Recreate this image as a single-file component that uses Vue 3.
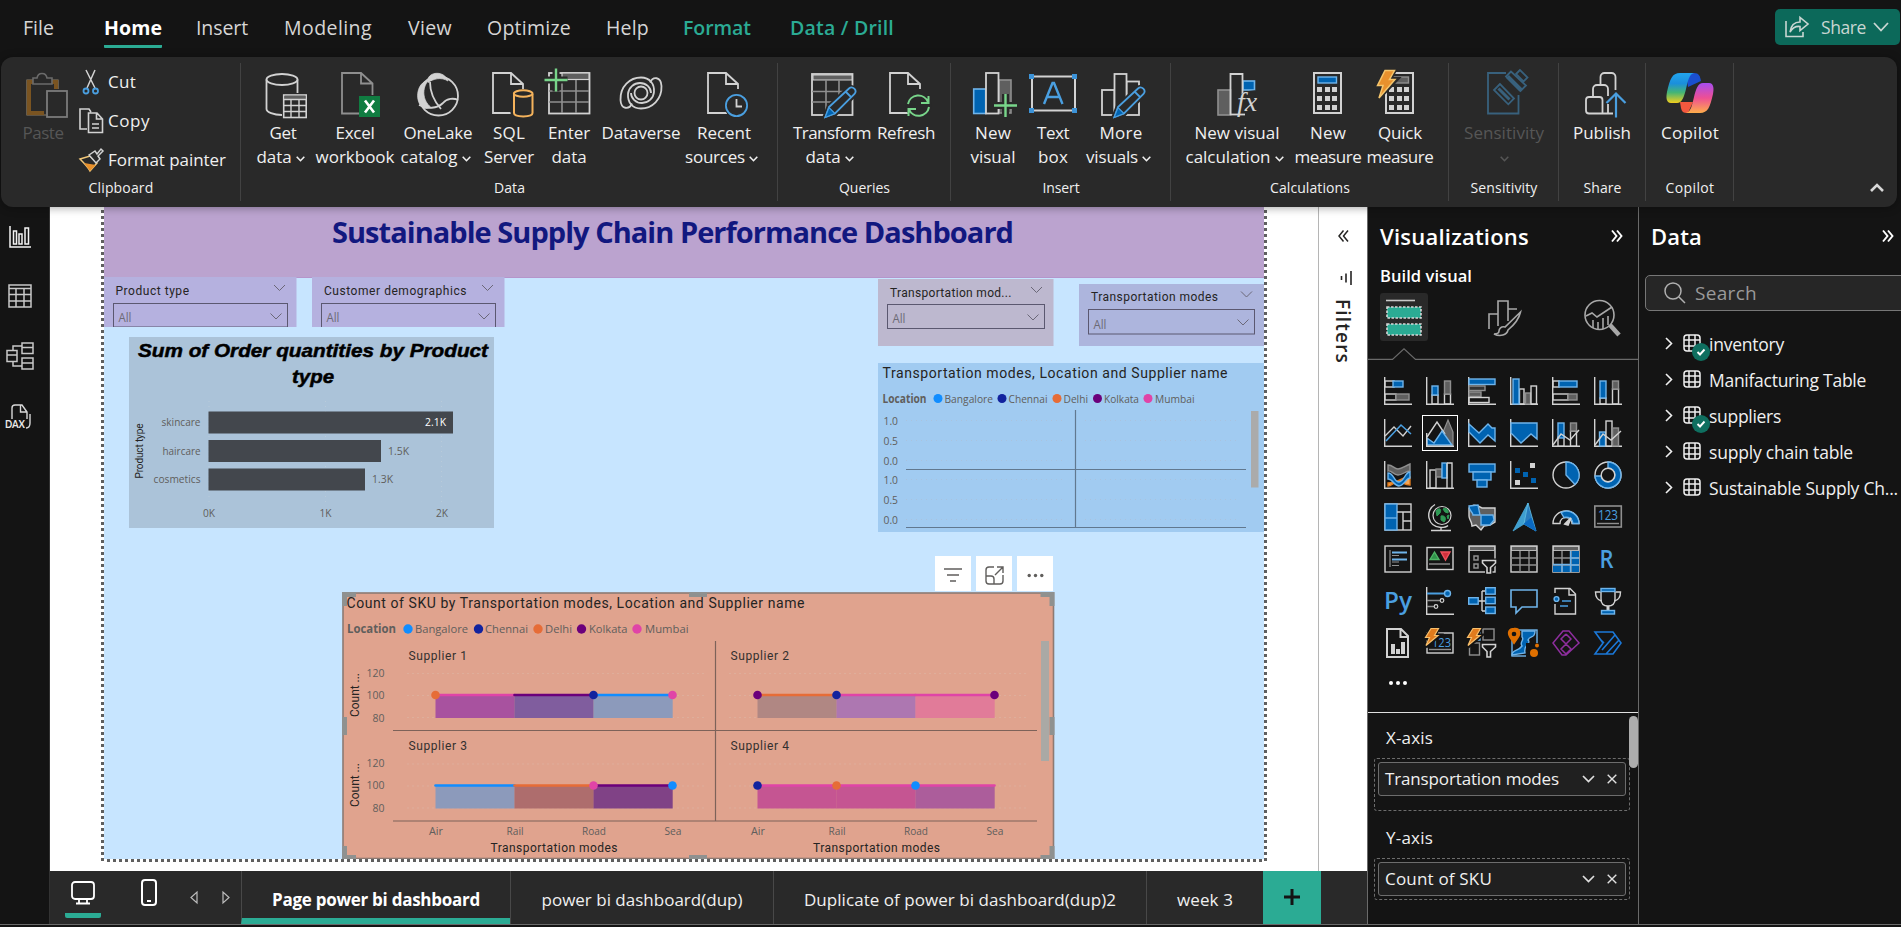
<script setup>
import { computed } from 'vue'

/* Tightens or loosens tracking so a label takes the given length */
const vFit = {
  mounted(el, { value }) {
    if (!value) return
    const n = el.textContent.trim().length
    const b = el.getBoundingClientRect()
    const vertical = getComputedStyle(el).writingMode.startsWith('vertical')
    el.style.letterSpacing = ((value - (vertical ? b.height : b.width)) / n).toFixed(3) + 'px'
  }
}

/* ---- small SVG builders ---- */
const W = '#d2d2d2', GR = '#8f8f8f', GF = '#5f5f5f', BF = '#0063b1', BS = '#6fb4ea', BL = '#4a9fe0', BG = '#292929'
const r = (x, y, w, h, f = 'none', s = 'none', sw = 1.4, rx = 0) => `<rect x="${x}" y="${y}" width="${w}" height="${h}" fill="${f}" stroke="${s}" stroke-width="${sw}" rx="${rx}"/>`
const p = (d, s = W, f = 'none', sw = 1.4) => `<path d="${d}" stroke="${s}" fill="${f}" stroke-width="${sw}"/>`
const c = (x, y, rad, f = 'none', s = 'none', sw = 1.4) => `<circle cx="${x}" cy="${y}" r="${rad}" fill="${f}" stroke="${s}" stroke-width="${sw}"/>`
const t = (x, y, s, size, f, len, wt = 400) => `<text x="${x}" y="${y}" font-size="${size}" fill="${f}" font-weight="${wt}" font-family="Open Sans, sans-serif" textLength="${len}" lengthAdjust="spacingAndGlyphs">${s}</text>`
const doc = (x, s = W) => p(`M${x + 20} 43H${x + 1}V3H${x + 19}L${x + 31} 14V19M${x + 19} 3V14H${x + 31}`, s, 'none', 1.8)
const pencil = p('M17 47l4-10L41 18a4.6 4.6 0 0 1 6 6L27 44z', BG, BG, 5) + p('M17.5 47l3.5-10L41 18.500a3.900 3.900 0 0 1 5.500 5.500L27 43.500zM37.500 21.500l6 6', BL, BG, 1.8) + p('M17 47.500l4-10 6 6z', BL, '#0063b1', 1.2)
const plus = (x, y, n) => p(`M${x - n} ${y}H${x + n}M${x} ${y - n}V${y + n}`, BG, 'none', 7) + p(`M${x - n} ${y}H${x + n}M${x} ${y - n}V${y + n}`, '#78d58a', 'none', 2.4)
const calc = r(10, 3, 27, 40, BG, W, 2) + [17, 26, 35].map(y => [13, 21, 28].map(x => r(x, y, 5, 5, W)).join('')).join('')
const swirl = 'M15 33.500C12 40 4 39.500 3.500 30C3 16.500 13 7.500 24 7.500C33 7.500 37.500 14 37 22C36.500 28.500 31 33 25 33C19 33 14 28.500 14 23'

const ribbonIcons = {
  getdata: `<ellipse cx="23" cy="9.500" rx="15.500" ry="5.500" fill="none" stroke="${W}" stroke-width="1.800"/>` + p('M7.500 9.500V39c0 3 7 6 15.500 6M38.500 9.500V23', W, 'none', 1.8) + r(24.700, 25, 22.500, 22.500, BG, W, 1.6) + r(25.500, 25.700, 21, 3.500, GF) + p('M25 29.500H47M25 35.500H47M25 41.500H47M32 29.500V47M40 29.500V47', W, 'none', 1.4),
  excel: p('M28 43.500H11V3H30L41.500 13.500V25M30 3V13.500H41.500', GR, 'none', 1.8) + r(28, 26, 21, 21, '#107c41') + p('M34 30.500L43 42.500M43 30.500L34 42.500', '#fff', 'none', 2.600),
  onelake: c(24.500, 26, 19.500, 'none', W, 1.8) + p('M14 9.500C15 2 30 0 34 11 27 6.500 19 9 14 12.500zM12 11C2 15 1 32 9 38c4 1 6 0 8-.500C8 30 8 18 14 11z', W, W, .8) + p('M16 12c0 8 3 18 11 27M5 35c8 4 18 4 24-2 4-5 11-5 15-3', W, 'none', 1.8),
  sql: doc(7) + `<path d="M28 24v19c0 5 20 5 20 0V24" fill="${BG}" stroke="${BG}" stroke-width="5"/><path d="M29 24v19c0 4.500 18.500 4.500 18.500 0V24" fill="${BG}" stroke="#f5b35c" stroke-width="2"/><ellipse cx="38.200" cy="23.500" rx="9.300" ry="3.200" fill="${BG}" stroke="#f5b35c" stroke-width="2"/>`,
  enter: r(4, 3, 40.500, 40.500, 'none', W, 1.8) + r(17, 3, 27, 6.500, GF, W, 1.2) + p('M4 21H44M4 32H44M17 10V43M31 10V43', GR, 'none', 1.6) + plus(11, 10, 11.500),
  dataverse: p(swirl, W, 'none', 1.8) + `<g transform="rotate(180 24 23)">${p(swirl, W, 'none', 1.8)}</g>` + c(24, 23, 6.500, BG, W, 1.8),
  recent: doc(7) + c(36.500, 35.500, 12.500, BG) + c(36.500, 35.500, 10.600, BG, BL, 1.8) + p('M36.500 29V36.500H42', W, 'none', 1.8),
  transform: r(4, 4, 40.500, 41, 'none', W, 1.8) + r(5, 5, 39, 5, GF, W, 1) + p('M4 21.500H36M4 32H27M18 10V44M31 10V26', GR, 'none', 1.6) + pencil,
  refresh: doc(7) + c(36.500, 35.500, 13, BG) + p('M26 34a10.500 10.500 0 0 1 20-2M47 37a10.500 10.500 0 0 1-20 2.500M46.500 26V33H39M26.500 46V39H34', '#78d58a', 'none', 2),
  newvisual: r(4.700, 19, 12, 24.500, BF, BS, 1.6) + r(30, 10, 12, 33, GF, GR, 1.6) + r(17, 3, 12.500, 40.500, BG, W, 1.8) + plus(36.500, 35.500, 11.500),
  textbox: r(3, 6.500, 43, 34, 'none', W, 2) + [[0, 4], [43, 4], [0, 38], [43, 38]].map(a => r(a[0], a[1], 5, 5, '#3c93d8')).join('') + p('M15 34L23.500 13H25L33.500 34M18 27H31', BL, 'none', 2.4),
  morevisuals: r(5, 20, 12.500, 25, BG, W, 1.8) + r(29.500, 11.500, 12.500, 33.500, BG, W, 1.8) + r(17.500, 4, 12, 41, BG, W, 1.8) + pencil,
  calculation: r(5, 20, 12.500, 25, GF, GR, 1.6) + r(30, 11, 11.500, 9, BF, BS, 1.6) + p('M17.500 45V4H29.500V24', W, 'none', 1.8) + p('M17.500 44.500H32', W, 'none', 1.8) + p('M30 24c4-2 7-3 12-3v12H30z', BG, BG) + `<text x="24" y="41" font-family="Liberation Serif, serif" font-style="italic" font-size="28" fill="${W}">fx</text>`,
  measure: calc + r(14, 7, 18.500, 6, BF, BS, 1.4),
  quick: calc + r(14, 7, 18.500, 6, GF, GR, 1.4) + p('M9 0h10l-5 9h7L2 29l4-13H0z', BG, BG, 4) + p('M9 .500h9.500l-5 9H19L3 28l4-12.500H1.500z', '#f5c66d', '#e8912d', 1.5),
  sensitivity: p('M26 3H8V43.500H38.500V25', '#38617d', 'none', 1.8) + `<g fill="${BG}" stroke="#38617d" stroke-width="1.800"><path d="M20 14L14 20 28.300 34.300 34 28.500z"/><path d="M18.500 18.500L29.500 29.500" stroke-width="3"/><path d="M40 0L36 4 43.500 11.500 47.500 7.500z"/><path d="M31 1.500L26 6.500 40.500 21 46 15.500z"/><path d="M27.500 6.500L41 20" stroke-width="4"/></g>`,
  publish: p('M22.500 15V7a4 4 0 0 1 4-4h7a4 4 0 0 1 4 4V20M15 26.500V19a4 4 0 0 1 4-4h7a4 4 0 0 1 4 4V26M30 34V43.500', W, 'none', 1.8) + p('M24.500 43.500V30a3 3 0 0 0-3-3H11a3 3 0 0 0-3 3V40.500a3 3 0 0 0 3 3H35', W, 'none', 1.8) + p('M38 47.500V24M28.500 33L38 23.500 47.500 33', BL, 'none', 2.2),
  copilot: `<defs><linearGradient id="cpa" x1="0" y1="0" x2="0" y2="1"><stop offset="0" stop-color="#22a5ee"/><stop offset=".35" stop-color="#1b8fdc"/><stop offset=".65" stop-color="#45b575"/><stop offset="1" stop-color="#f2cf1d"/></linearGradient><linearGradient id="cpb" x1="0" y1="0" x2="0" y2="1"><stop offset="0" stop-color="#a64df0"/><stop offset=".5" stop-color="#ee4f94"/><stop offset="1" stop-color="#ffae4a"/></linearGradient></defs><path d="M20 3h8c5 0 6 3 7 8l-13 6z" fill="#1a4fd0"/><path d="M14 32h13l-5 11c-5 0-6-1-7-5z" fill="#f2583e"/><path d="M14 3h14c-5 1-6 8-8 16-2 8-4 14-9 14H5c-5 0-5-6-4-11C4 9 6 3 14 3z" fill="url(#cpa)"/><path d="M34 43H20c5-1 6-8 8-16 2-8 4-14 9-14h6c5 0 5 6 4 11-3 13-5 19-13 19z" fill="url(#cpb)"/>`
}

const tabs = [
  { label: 'File', x: 23, w: 31 }, { label: 'Home', x: 104, w: 58, active: true }, { label: 'Insert', x: 196, w: 52 },
  { label: 'Modeling', x: 284, w: 88 }, { label: 'View', x: 408, w: 44 }, { label: 'Optimize', x: 487, w: 84 },
  { label: 'Help', x: 606, w: 43 }, { label: 'Format', x: 683, w: 68, green: true }, { label: 'Data / Drill', x: 790, w: 104, green: true }
]
tabs.forEach((tab, i) => { tab.gap = tab.x - (i ? tabs[i - 1].x + tabs[i - 1].w : 0) })

const groups = [
  { name: 'Data', nw: 31, left: 241, right: 778, items: [
    { cx: 283, icon: 'getdata', a: 'Get', aw: 27, b: 'data', bw: 35, menu: true },
    { cx: 355, icon: 'excel', a: 'Excel', aw: 39, b: 'workbook', bw: 79 },
    { cx: 438, icon: 'onelake', a: 'OneLake', aw: 69, b: 'catalog', bw: 57, menu: true },
    { cx: 509, icon: 'sql', a: 'SQL', aw: 32, b: 'Server', bw: 50 },
    { cx: 569, icon: 'enter', a: 'Enter', aw: 42, b: 'data', bw: 35 },
    { cx: 641, icon: 'dataverse', a: 'Dataverse', aw: 79 },
    { cx: 724, icon: 'recent', a: 'Recent', aw: 54, b: 'sources', bw: 60, menu: true }] },
  { name: 'Queries', nw: 51, left: 778, right: 951, items: [
    { cx: 832, icon: 'transform', a: 'Transform', aw: 78, b: 'data', bw: 35, menu: true },
    { cx: 906, icon: 'refresh', a: 'Refresh', aw: 58 }] },
  { name: 'Insert', nw: 37, left: 951, right: 1171, items: [
    { cx: 993, icon: 'newvisual', a: 'New', aw: 36, b: 'visual', bw: 45 },
    { cx: 1053, icon: 'textbox', a: 'Text', aw: 32, b: 'box', bw: 30 },
    { cx: 1121, icon: 'morevisuals', a: 'More', aw: 43, b: 'visuals', bw: 52, menu: true }] },
  { name: 'Calculations', nw: 80, left: 1171, right: 1449, items: [
    { cx: 1237, icon: 'calculation', a: 'New visual', aw: 85, b: 'calculation', bw: 85, menu: true },
    { cx: 1328, icon: 'measure', a: 'New', aw: 36, b: 'measure', bw: 67 },
    { cx: 1400, icon: 'quick', a: 'Quick', aw: 44, b: 'measure', bw: 67 }] },
  { name: 'Sensitivity', nw: 67, left: 1449, right: 1559, items: [
    { cx: 1504, icon: 'sensitivity', a: 'Sensitivity', aw: 80, b: '', menu: true, off: true }] },
  { name: 'Share', nw: 38, left: 1559, right: 1646, items: [{ cx: 1602, icon: 'publish', a: 'Publish', aw: 58 }] },
  { name: 'Copilot', nw: 49, left: 1646, right: 1734, items: [{ cx: 1690, icon: 'copilot', a: 'Copilot', aw: 58 }] }
]
groups.forEach(g => g.items.forEach((it, i) => { it.gap = i ? it.cx - g.items[i - 1].cx - 48 : it.cx - 24 - g.left }))

/* ---- visual gallery ---- */
const ax = p('M.7 0V27.300H28', W)
const tbl = r(1, 1, 26, 26, 'none', W) + r(1.500, 1.500, 25, 4, GF, W, .8)
const bolt = p('M5-1h8L9 6h5L0 18l3-8H-2z', '#141414', '#141414', 3) + p('M5-.500h7.500L8.500 6.500H12L0 16.500 3.500 8.500H-.500z', '#f8bf6b', '#e07b1d', 1.2)
const funnel = p('M15 15.500h12v3l-4.500 4V28h-3.500v-5.500L15 18.500z', '#141414', '#141414', 4) + p('M14.500 15.500h13v2.500l-5 4.500V28h-3.500v-5.500l-4.500-4.500z', W, '#141414', 1.6)
const gallery = [
  ax + r(1, 4, 9, 6, 'none', W) + r(9, 4, 10, 6, BF, BS) + r(1, 17, 11, 6, 'none', W) + r(12, 17, 13, 6, GF, GR),
  ax + r(6, 18, 6, 9, 'none', W) + r(6, 9, 6, 9, BF, BS) + r(18.500, 17, 6, 10, 'none', W) + r(18.500, 4, 6, 13, GF, GR),
  ax + r(1, 2, 26, 5.500, BF, BS) + r(1, 9, 16, 4.500, '#333', GR) + r(1, 15, 12, 4.500, GF, GR) + r(1, 20.500, 20, 5, 'none', W),
  ax + r(9.500, 12, 4.500, 15, 'none', W) + r(3, 2, 6, 25, BF, BS) + r(15.500, 16, 5, 11, GF, GR) + r(21, 9, 5.500, 18, 'none', W),
  ax + r(1, 4, 6, 6, 'none', W) + r(7, 4, 18, 6, BF, BS) + r(1, 17, 15, 6, 'none', W) + r(16, 17, 9, 6, GF, GR),
  ax + r(6, 21, 6, 6, 'none', W) + r(6, 4, 6, 17, BF, BS) + r(18.500, 12, 6, 15, 'none', W) + r(18.500, 4, 6, 8, GF, GR),
  ax + p('M1 17L10 8l9 9 8-10', W) + p('M2 22L17 6l10 9', BL, 'none', 1.6),
  p('M15 18L22 1l5 12V26H14z', GR, GF, 1.2) + p('M1 18L11 3l8 12', W) + p('M1 26V19l7 5 8-12 10 14z', BS, BF, 1.4) + p('M.7 14V27.300H28'),
  ax + p('M1 5l10 9 9-9 4 4h3V22l-7-6-8 8L1 13z', BS, BF),
  ax + p('M1 4H27V20l-6-5-10 9L1 14z', BS, BF),
  ax + r(6, 18, 6, 9, '#141414', W) + r(6, 4, 6, 15, BF, BS) + r(18.500, 12, 6, 15, '#141414', W) + r(18.500, 4, 6, 8, GF, GR) + p('M1 26l8-11 9 6 9-10', W),
  ax + r(5.500, 13, 6, 14, BF, BS) + r(12, 2, 6, 25, '#141414', W) + r(18.500, 9, 6, 18, GF, GR) + p('M1 26l8-11 8 6 10-9', W),
  ax + p('M4 4c5 0 6 4 10 4s7-3 12-5v7c-5 0-7 4-12 4S8 9 4 10z', GR, GF) + p('M4 22c6 0 10-2 14-4s6-3 8-2v8c-6 0-7-3-12-3s-6 4-10 4z', '#e07b1d', '#f5a655') + p('M4 12c6 0 6 9 11 9s6-10 11-10v6c-4 0-6 8-11 8S9 18 4 18z', BS, BF),
  ax + r(4, 9, 6, 18, 'none', W) + r(10, 8, 6, 8, GF, GR) + r(16, 2, 5, 15, BF, BS) + p('M21 2H26V27M21 27V2', W),
  r(1, 3, 26, 8, BF, BS) + r(5, 11, 18, 8, BF, BS) + r(9, 19, 10, 7, BF, BS),
  ax + r(20, 2, 5, 5, W) + r(5, 7, 5, 5, BF) + r(13, 11, 5, 5, BF) + r(21, 17, 5, 5, BF) + r(5, 19, 5, 5, W),
  c(14, 14, 13, 'none', W) + p('M14 1a13 13 0 0 1 9 22.500L14 14z', BS, BF),
  c(14, 14, 13, '#141414', W) + p('M14 1a13 13 0 1 1-13 14h6A7 7 0 1 0 14 7z', BS, BF) + c(14, 14, 6.800, '#141414', W),
  r(1, 1, 26, 26, 'none', W) + r(1, 1, 12, 26, BF, BS) + p('M1 15H13', BS) + p('M13 9H27M19 9V27M19 18H27', W),
  c(16, 12.500, 9, '#141414', W, 1.2) + p('M10 8c3-4 6-2 4 2l-3 3zM17 6c3-2 6 1 5 4l-3-1zM15 13c4-1 6 3 3 6l-3-2zM21 13l2-1-1 4z', '#2f9a55', '#2f9a55', 1) + p('M9 1.500C-1 7 1 24 15 24.500c4 0 6-1 7-2M15 24.500V27M5 27.500H25', W),
  p('M1 5c4-4 6-3 9-2l4 2h13v14l-5 3-6 1-3 4-5-5-4 1c0-5-3-6-3-10z', W, GF) + p('M1 3l9-1 2 10H5c0-3-4-4-4-9zM13 12h12l1 5-4 5h-9z', BS, BF),
  p('M18 0L3 28l11-7z', '#4aa9d8', '#3f9fd0', .8) + p('M18 0l8 28-12-7z', '#65c3ea', '#2a7dbd', .8) + p('M14 21l12 7-5-13z', '#0a69c2', '#0a69c2', .8),
  p('M1 20.500C1 13 7 8 14 8s13 5 13 12.500h-7c0-4-3-6-6-6s-6 2-6 6z', W, '#141414') + p('M9 9.500C18 5 27 12 27 20.500h-6c0-4-4-7-9-6z', BS, BF) + p('M13 21l6-6-3 7z', W, W, 1.800),
  r(.800, 3, 26.500, 21, 'none', GR, 1.6) + t(4, 17, '123', 14, BL, 20) + p('M3 20.500H25', GR),
  r(1, 1, 26, 26, 'none', W) + p('M6 5V22M8 17H15M8 10.500H15M8 20.500H15', GR, 'none', 1.2) + p('M8 7.500H23M8 14.500H23', BS, 'none', 2),
  r(1, 2.500, 26, 22, 'none', W) + p('M4 14.500L8.500 7l4.500 7.500z', '#4fb465', '#30924a') + p('M15 7h9l-4.500 8z', '#f0505c', '#d0303c') + p('M3 19H24', GR),
  r(1, 1, 26, 26, 'none', W) + r(1.500, 1.500, 25, 4, GF, W, .8) + r(6, 11, 4, 4, 'none', GR, 1.5) + r(6, 19, 4, 4, 'none', GR, 1.5) + funnel,
  tbl + p('M1 13H27M1 20H27M10 6V27M19 6V27', GR),
  tbl + r(19, 6, 8, 21, BF) + r(1, 20, 26, 7, BF) + p('M1 13H27M1 20H27M10 6V27M19 6V27', GR) + p('M18.500 6V19.500H1M18.500 13H27M18.500 20H27M10 20V27M18.500 20V27', BS),
  t(5.5, 23, 'R', 25, BL, 14, 600),
  t(0, 22, 'Py', 24, BL, 28, 600),
  p('M.7 0V27.300H28', W) + p('M1 6.500H18', BL, 'none', 2) + c(21.500, 6.500, 3, BF, BS) + p('M1 13.500H15M1 19.500H9', GR) + c(16, 13.500, 1.800, '#141414', W, 1.2) + c(10, 19.500, 1.800, '#141414', W, 1.2),
  p('M10 14H18M14 4V24M14 4H18M14 24H18', W) + r(.700, 10.700, 9.500, 6.500, BF, BS) + r(17.700, .700, 9.500, 6.500, BF, BS) + r(17.700, 10.200, 9.500, 6.500, BF, BS) + r(17.700, 20, 9.500, 6.500, BF, BS),
  p('M1 3H27V20H12L6 26V20H1z', BS, 'none', 1.6),
  p('M3 6V1.500H18L23.500 7V27H3V17M17 1.500V8H23.500', W) + c(4.500, 12, 2.400, BF, BS) + p('M10 14H19M8 19H16', BL, 'none', 1.500),
  p('M6.500 5H1.500c0 6 2 8 6 9M21.500 5h5c0 6-2 8-6 9', W) + p('M7 5V12c0 5 3 7 7 7s7-2 7-7V5', W) + p('M14 19V23', W, 'none', 3) + r(7, 1.500, 14, 3, BF, BS) + r(7.500, 23.500, 13, 3.500, BF, BS),
  p('M3 0H17L24 7V28H3zM16.500 0V8H24', W, 'none', 2) + p('M9 15V25M14 20V25M19 13V25', W, 'none', 4),
  r(1, 4, 26, 20, 'none', W) + t(6, 18, '123', 13, BL, 19) + p('M3 20.500H25', GR) + bolt,
  r(15, 0, 11, 11, 'none', GR) + r(1.500, 14, 10, 12, 'none', GR) + p('M8 10l4-5V11H8z', BS, BF) + bolt + funnel,
  r(2, 1, 25, 26, '#141414', BS) + p('M12 2H25c0 8-5 4-7 9 4 4-5 4-3 13L2 26c0-6 6-3 10-9-3-4 3-6 0-9z', BS, BF) + r(16, 14, 12, 14, '#141414') + p('M4-.500c6-1 7 5 4 9l-4 6-4-6c-3-5-1-9 4-9z', '#e07000', '#e07000') + c(4, 5, 2.300, '#141414') + c(24, 24, 4, '#e07000') + c(27, 16.500, 2, '#e07000'),
  p('M11 2L1 14 10 26h4L27 14 17 2zM11 2h6M14 5l5 5-5 5 5 5-5 5M14 5l-5 5 5 5-5 5 5 5', '#8e2e9e', 'none', 1.500),
  p('M1 3H19L27 14 19 25H1L9 14zM21 6L8 21M25 11L12 25M6 10l4 4', '#1b78d8', 'none', 1.600)
]

const legend = [
  { n: 'Bangalore', color: '#118dff' }, { n: 'Chennai', color: '#12239e' }, { n: 'Delhi', color: '#e66c37' },
  { n: 'Kolkata', color: '#6b007b' }, { n: 'Mumbai', color: '#e044a7' }
]
const legendA = [[938, 944.5, 48.5], [1002, 1008.5, 39], [1057, 1063.5, 24.5], [1097.5, 1104, 35], [1148, 1155, 39.5]]
const legendB = [[408, 415, 53], [478.5, 485, 43], [538, 545, 27], [581.5, 589, 38.5], [637, 645, 43.5]]

const slicers = [
  { x: 104, y: 277, w: 192.5, h: 50, bg: '#b5b1df', label: 'Product type', tx: 115.5, tw: 73.5, base: 294.5, cx: 274, cy: 285, bx: 113.5, by: 303.500, bw: 174, bh: 23.500, ax: 118.5, ay: 322 },
  { x: 312, y: 277, w: 192.5, h: 50, bg: '#b5b1df', label: 'Customer demographics', tx: 324, tw: 142.5, base: 294.5, cx: 482, cy: 285, bx: 321.5, by: 303.500, bw: 174, bh: 30, ax: 326.500, ay: 322 },
  { x: 878, y: 279, w: 175.5, h: 67, bg: '#bdb8cf', label: 'Transportation mod...', tx: 890, tw: 121.500, base: 296.5, cx: 1031, cy: 287, bx: 887.5, by: 304.500, bw: 157, bh: 24, ax: 892.500, ay: 323 },
  { x: 1079, y: 283.5, w: 185, h: 62.5, bg: '#adb5dd', label: 'Transportation modes', tx: 1091, tw: 127, base: 300.5, cx: 1241, cy: 291, bx: 1088.5, by: 309, bw: 166, bh: 24.500, ax: 1093.500, ay: 328 }
]
const box = s => ({ left: s.x - 104 + 'px', top: s.y - 207 + 'px', width: s.w + 'px', height: s.h + 'px' })

const bars = [
  { n: 'skincare', y: 411, w: 244.5, lw: 39, v: '2.1K', vx: 425, inside: true },
  { n: 'haircare', y: 439.500, w: 172.5, lw: 38, v: '1.5K', vx: 388 },
  { n: 'cosmetics', y: 468, w: 156.5, lw: 47, v: '1.3K', vx: 372 }
]
const panels = [
  { n: 'Supplier 1', x: 435.5, y: 695, fills: ['#a8529f', '#805d9e', '#8c9abb'], lines: ['#e044a7', '#6b007b', '#118dff'], dots: [[0, '#e66c37'], [2, '#12239e'], [3, '#e044a7']] },
  { n: 'Supplier 2', x: 757.5, y: 695, fills: ['#b08783', '#ad77b1', '#e17b99'], lines: ['#e66c37', '#e044a7', '#e044a7'], dots: [[0, '#6b007b'], [1, '#12239e'], [3, '#6b007b']] },
  { n: 'Supplier 3', x: 435.5, y: 785.5, fills: ['#8c9abb', '#ae6d6d', '#804286'], lines: ['#118dff', '#e66c37', '#6b007b'], dots: [[2, '#e044a7'], [3, '#118dff']] },
  { n: 'Supplier 4', x: 757.5, y: 785.5, fills: ['#c55592', '#c55592', '#ac5d9b'], lines: ['#e044a7', '#e044a7', '#e044a7'], dots: [[0, '#12239e'], [1, '#e66c37'], [2, '#118dff']] }
]
const modes = computed(() => [435.5, 757.5].flatMap(x => [['Air', 14], ['Rail', 17], ['Road', 24], ['Sea', 17]].map(([n, w], i) => ({ n, w, x: x + i * 79 + .5 }))))
const handles = ['M342 592h14v5h-9v9h-5z', 'M1054.500 592h-14v5h9v9h5z', 'M342 859v-13h5v9h9v4z', 'M1054.500 859v-13h-5v9h-9v4z', 'M689 592h18v5h-18z', 'M689 855h18v4h-18z', 'M342 717h5v18h-5z', 'M1049.500 717h5v18h-5z']

const pages = [
  { n: 'Page power bi dashboard', w: 269, tw: 208, active: true },
  { n: 'power bi dashboard(dup)', w: 263, tw: 201 },
  { n: 'Duplicate of power bi dashboard(dup)2', w: 373, tw: 312 },
  { n: 'week 3', w: 117, tw: 56 }
]
const tables = [
  { n: 'inventory', w: 75, used: true }, { n: 'Manifacturing Table', w: 157 }, { n: 'suppliers', w: 72, used: true },
  { n: 'supply chain table', w: 144 }, { n: 'Sustainable Supply Ch...', w: 189 }
]
const wells = [
  { n: 'X-axis', nw: 47, f: 'Transportation modes', fw: 174, tall: true },
  { n: 'Y-axis', nw: 47, f: 'Count of SKU', fw: 107 }
]
</script>

<template>
  <div class="app">
    <header class="menu">
      <nav class="tabs">
        <a v-for="tab in tabs" :key="tab.label" class="tab" :class="{ active: tab.active, green: tab.green }" :style="{ marginLeft: tab.gap + 'px', width: tab.w + 'px' }"><span v-fit="tab.w">{{ tab.label }}</span></a>
      </nav>
      <button class="share">
        <svg width="24" height="22" viewBox="0 0 24 22" fill="none" stroke="#c9d6d2" stroke-width="1.6"><path d="M1 5V20.500H18V16M5 16C6 9 10 6 15 6V1.500L23 8 15 14.500V10.500C11 10 8 11 5 16z" /></svg>
        <span v-fit="45">Share</span>
        <svg width="16" height="10" viewBox="0 0 16 10" fill="none" stroke="#c9d6d2" stroke-width="1.8"><path d="M1 1L8 8.500 15 1" /></svg>
      </button>
    </header>

    <section class="ribbon">
      <div class="group clipboard">
        <div class="clip-body">
          <div class="paste">
            <svg width="42" height="47" viewBox="0 0 42 47" fill="none">
              <path d="M20 43H1V8H32V17" stroke="#8f8068" stroke-width="1.200" /><path d="M18 41H3V10H30V17" stroke="#7a5421" stroke-width="4" />
              <path d="M7 12V6H11C12 0 20 0 21 6H26V12z" fill="#292929" stroke="#6b6b6b" stroke-width="1.600" />
              <rect x="21" y="19" width="20" height="26" fill="#292929" stroke="#7b7b7b" stroke-width="1.800" />
            </svg>
            <span v-fit="41">Paste</span>
          </div>
          <ul class="clip-list">
            <li><svg width="24" height="26" viewBox="0 0 24 26" fill="none"><path d="M7 1L16 19M16 1L8 19" stroke="#d2d2d2" stroke-width="1.500" /><circle cx="7" cy="22" r="2.500" stroke="#4a9fe0" stroke-width="1.800" /><circle cx="16.500" cy="22" r="2.500" stroke="#4a9fe0" stroke-width="1.800" /></svg><span v-fit="28">Cut</span></li>
            <li><svg width="24" height="26" viewBox="0 0 24 26" fill="none" stroke="#d2d2d2" stroke-width="1.600"><path d="M8 21H1V1H10L12 4M9.500 5H18L23.500 11V24.500H9.500zM17.500 5V11H23.500M13 16H20M13 20H20" /></svg><span v-fit="42">Copy</span></li>
            <li><svg width="24" height="26" viewBox="0 0 24 26"><path d="M1 12L11 9l7 7L11 24C9 20 5 16 1 12z" fill="#292929" stroke="#f2c879" stroke-width="1.500" /><path d="M5 16l12 2L11 24z" fill="#e8912d" /><path d="M10 8L16 4 18 7 22 2 24 4 19 9 21 12 17 16z" fill="#292929" stroke="#d2d2d2" stroke-width="1.500" /></svg><span v-fit="118">Format painter</span></li>
          </ul>
        </div>
        <div class="gname"><span v-fit="65">Clipboard</span></div>
      </div>

      <div v-for="g in groups" :key="g.name" class="group" :style="{ width: g.right - g.left + 'px' }">
        <div class="gbody">
          <div v-for="it in g.items" :key="it.icon" class="rbtn" :class="{ off: it.off }" :style="{ marginLeft: it.gap + 'px' }">
            <svg class="ricon" width="48" height="48" viewBox="0 0 48 48" v-html="ribbonIcons[it.icon]"></svg>
            <div class="rl"><span v-fit="it.aw">{{ it.a }}</span></div>
            <div v-if="it.b || it.menu" class="rl" :class="{ menu2: it.menu && it.b }">
              <span v-if="it.b" v-fit="it.bw">{{ it.b }}</span>
              <svg v-if="it.menu" width="9" height="6" viewBox="0 0 9 6" fill="none" stroke="currentColor" stroke-width="1.600"><path d="M.7.700L4.500 4.700 8.300.700" /></svg>
            </div>
          </div>
        </div>
        <div class="gname"><span v-fit="g.nw">{{ g.name }}</span></div>
      </div>
      <svg class="collapse" width="14" height="9" viewBox="0 0 14 9" fill="none" stroke="#d8d8d8" stroke-width="2.600"><path d="M1 8L7 2 13 8" /></svg>
    </section>

    <main class="work">
      <aside class="rail">
        <svg width="22" height="22" viewBox="0 0 22 22" fill="none" stroke="#f2f2f2" stroke-width="1.500"><path d="M1 0V21H22M4.500 5H7.500V18H4.500zM10 8H13V18H10zM16 2H19.500V18H16z" /></svg>
        <svg width="24" height="24" viewBox="0 0 24 24" fill="none" stroke="#c8c8c8" stroke-width="1.500"><path d="M1 1H23V23H1zM1 4.500H23M1 10.500H23M1 17H23M8 4.500V23M16 4.500V23" /></svg>
        <svg width="28" height="28" viewBox="0 0 28 28" fill="none" stroke="#c8c8c8" stroke-width="1.500"><path d="M1 8.500H11V19.500H1zM1 13H11M16 1H27V11.500H16zM16 5.500H27M16 16H27V27H16zM16 21H27M7 8.500V4H16M7 19.500V24H16" /></svg>
        <svg width="28" height="26" viewBox="0 0 28 26" fill="none" stroke="#d8d8d8" stroke-width="1.400"><path d="M7 15V4C7 2 8 1 10 1H17L22 8V15M15.500 1V8H22M25 10V19C25 22 24 24 21 24" /><text x="0" y="24" font-family="Lato, sans-serif" font-weight="700" font-size="10.500" fill="#e8e8e8" stroke="none" textLength="20" lengthAdjust="spacingAndGlyphs">DAX</text></svg>
      </aside>

      <section class="center">
        <div class="stage">
          <div class="frame">
            <div class="page">
              <div class="banner"><h1 v-fit="681">Sustainable Supply Chain Performance Dashboard</h1></div>

              <svg v-for="(s, i) in slicers" :key="i" class="visual" :style="box(s)" :viewBox="`${s.x} ${s.y} ${s.w} ${s.h}`">
                <rect :x="s.x" :y="s.y" :width="s.w" :height="s.h" :fill="s.bg" />
                <text class="din" :x="s.tx" :y="s.base" font-size="12" :textLength="s.tw" lengthAdjust="spacing" fill="#252423">{{ s.label }}</text>
                <path :d="`M${s.cx} ${s.cy}l5.500 5.500 5.500-5.500`" class="chev" />
                <rect :x="s.bx" :y="s.by" :width="s.bw" :height="s.bh" fill="none" stroke="#5b5870" />
                <text class="ui" :x="s.ax" :y="s.ay" font-size="12" textLength="13" lengthAdjust="spacingAndGlyphs" fill="#6c6a75">All</text>
                <path :d="`M${s.bx + s.bw - 17} ${s.by + 10}l5.500 5.500 5.500-5.500`" class="chev" />
              </svg>

              <svg class="visual" :style="box({ x: 129, y: 337, w: 365, h: 191 })" viewBox="129 337 365 191">
                <rect x="129" y="337" width="365" height="191" fill="#abc3d9" />
                <g class="heavy"><text x="138" y="356.500" textLength="350" lengthAdjust="spacingAndGlyphs">Sum of Order quantities by Product</text><text x="292" y="383" textLength="42" lengthAdjust="spacingAndGlyphs">type</text></g>
                <path d="M209 401V502M325.500 401V502M441.500 401V502" stroke="#b9cbda" stroke-dasharray="1 4" />
                <g v-for="b in bars" :key="b.n">
                  <rect x="208.500" :y="b.y + .500" :width="b.w" height="22" fill="#43474d" />
                  <text class="ui mute" :x="200.500 - b.lw" :y="b.y + 15" :textLength="b.lw" lengthAdjust="spacingAndGlyphs">{{ b.n }}</text>
                  <text class="ui mute" :class="{ inside: b.inside }" :x="b.vx" :y="b.y + 15" textLength="21" lengthAdjust="spacingAndGlyphs">{{ b.v }}</text>
                </g>
                <text v-for="(k, i) in ['0K', '1K', '2K']" :key="k" class="ui mute" :x="203 + i * 116.500" y="516.500" textLength="12" lengthAdjust="spacingAndGlyphs">{{ k }}</text>
                <text class="din" transform="translate(142.500 478.500) rotate(-90)" font-size="10" textLength="55" lengthAdjust="spacing" fill="#252423">Product type</text>
              </svg>

              <svg class="visual" :style="box({ x: 878, y: 363, w: 386, h: 169 })" viewBox="878 363 386 169">
                <rect x="878" y="363" width="386" height="169" fill="#a1cbf1" />
                <text class="din" x="882.500" y="377.500" font-size="14" textLength="345" lengthAdjust="spacing" fill="#252423">Transportation modes, Location and Supplier name</text>
                <text class="ui mute bold" x="882.500" y="402.500" textLength="44" lengthAdjust="spacingAndGlyphs">Location</text>
                <g v-for="(l, i) in legend" :key="l.n"><circle :cx="legendA[i][0]" cy="398.500" r="4.500" :fill="l.color" /><text class="ui mute" :x="legendA[i][1]" y="402.500" :textLength="legendA[i][2]" lengthAdjust="spacingAndGlyphs">{{ l.n }}</text></g>
                <text v-for="(y, i) in [424.500, 444.500, 464.500, 483.500, 503.500, 523.500]" :key="y" class="ui mute" x="883.500" :y="y" textLength="14.500" lengthAdjust="spacingAndGlyphs">{{ ['1.0', '0.5', '0.0'][i % 3] }}</text>
                <path v-for="y in [420.500, 440.500, 460.500, 479.500, 499.500, 519.500]" :key="y" :d="`M906 ${y}H1066M1085 ${y}H1236`" stroke="#a9c2de" stroke-dasharray="1 4" />
                <path d="M906 469.500H1246M906 527.500H1246M1075.500 410V528" stroke="#61788f" stroke-width="1.200" />
                <rect x="1251" y="411" width="7.500" height="76.500" fill="#ababab" />
              </svg>

              <div class="vtools">
                <span><svg width="18" height="14" viewBox="0 0 18 14" fill="none" stroke="#605e5c" stroke-width="1.400"><path d="M0 1H18M3 7H15M6 13H12" /></svg></span>
                <span><svg width="19" height="19" viewBox="0 0 19 19" fill="none" stroke="#605e5c" stroke-width="1.400"><path d="M9 1H4C2 1 1 2 1 4V15C1 17 2 18 4 18H15C17 18 18 17 18 15V9M12 1H18V7M18 1L10 9M1 10H6C8 10 9 11 9 13V18" /></svg></span>
                <span><svg width="17" height="5" viewBox="0 0 17 5" fill="#605e5c"><circle cx="2.200" cy="2.500" r="1.700" /><circle cx="8.500" cy="2.500" r="1.700" /><circle cx="14.800" cy="2.500" r="1.700" /></svg></span>
              </div>

              <svg class="visual" :style="box({ x: 342, y: 592, w: 713, h: 267 })" viewBox="342 592 713 267">
                <rect x="343" y="593" width="710.500" height="265.500" fill="#e0a38e" stroke="#8d7a73" stroke-width="1.600" />
                <path v-for="h in handles" :key="h" :d="h" fill="#8f9190" />
                <text class="din" x="346.500" y="607.500" font-size="14" textLength="458" lengthAdjust="spacing" fill="#252423">Count of SKU by Transportation modes, Location and Supplier name</text>
                <text class="ui mute bold" x="347" y="633" textLength="49" lengthAdjust="spacingAndGlyphs">Location</text>
                <g v-for="(l, i) in legend" :key="l.n"><circle :cx="legendB[i][0]" cy="629" r="4.700" :fill="l.color" /><text class="ui mute" :x="legendB[i][1]" y="633" :textLength="legendB[i][2]" lengthAdjust="spacingAndGlyphs">{{ l.n }}</text></g>
                <g v-for="pn in panels" :key="pn.n">
                  <path :d="`M${pn.x - 28} ${pn.y - 21.500}h296M${pn.x - 28} ${pn.y + .500}h296M${pn.x - 28} ${pn.y + 22.500}h296`" stroke="#dcb9a9" stroke-dasharray="1 4" />
                  <text class="din" :x="pn.x - 27" :y="pn.y - 35.500" font-size="12" textLength="58.500" lengthAdjust="spacing" fill="#33302e">{{ pn.n }}</text>
                  <rect v-for="(f, i) in pn.fills" :key="i" :x="pn.x + i * 79" :y="pn.y" width="79.200" height="23" :fill="f" />
                  <path v-for="(s, i) in pn.lines" :key="'l' + i" :d="`M${pn.x + i * 79} ${pn.y}h79`" :stroke="s" stroke-width="2.600" stroke-linecap="round" />
                  <circle v-for="d in pn.dots" :key="'d' + d[0]" :cx="pn.x + d[0] * 79" :cy="pn.y" r="4.300" :fill="d[1]" />
                </g>
                <g v-for="y in [677, 767]" :key="y">
                  <text class="ui mute" x="366.500" :y="y" textLength="18" lengthAdjust="spacingAndGlyphs">120</text>
                  <text class="ui mute" x="366.500" :y="y + 22" textLength="18" lengthAdjust="spacingAndGlyphs">100</text>
                  <text class="ui mute" x="372.500" :y="y + 44.500" textLength="12" lengthAdjust="spacingAndGlyphs">80</text>
                  <text class="din" :transform="`translate(359 ${y + 40}) rotate(-90)`" font-size="12" textLength="44" lengthAdjust="spacing" fill="#252423">Count ...</text>
                </g>
                <path d="M393 730.500H1037M393 821H1037M715.500 641V821" stroke="#7d6259" stroke-width="1.200" />
                <text v-for="m in modes" :key="m.x" class="ui mute" text-anchor="middle" :x="m.x" y="835" :textLength="m.w" lengthAdjust="spacingAndGlyphs">{{ m.n }}</text>
                <text v-for="x in [490.500, 813]" :key="x" class="din" :x="x" y="852" font-size="12" textLength="127" lengthAdjust="spacing" fill="#252423">Transportation modes</text>
                <rect x="1041" y="641" width="8" height="120" fill="#aaa9a5" />
              </svg>
            </div>
          </div>
          <div class="filters">
            <svg width="11" height="12" viewBox="0 0 11 12" fill="none" stroke="#252423" stroke-width="1.500"><path d="M5.500.500L1 6 5.500 11.500M10 .500L5.500 6 10 11.500" /></svg>
            <svg class="fi" width="12" height="14" viewBox="0 0 12 14" fill="none" stroke="#252423" stroke-width="1.600"><path d="M11 0V14M6 2.500V11.500M1.500 5V9" /></svg>
            <span class="ft"><span v-fit="65">Filters</span></span>
          </div>
        </div>

        <footer class="pages">
          <div class="device on"><svg width="24" height="24" viewBox="0 0 24 24" fill="none" stroke="#fff" stroke-width="1.800"><rect x="1" y="1" width="22" height="17" rx="3" /><path d="M8 18V22M16 18V22M5 22.500H19" /></svg></div>
          <div class="device phone"><svg width="16" height="27" viewBox="0 0 16 27" fill="none" stroke="#fff" stroke-width="2"><rect x="1" y="1" width="14" height="25" rx="3" /><path d="M6 22H10" /></svg></div>
          <svg class="arr1" width="8" height="13" viewBox="0 0 8 13" fill="none" stroke="#bdbdbd" stroke-width="1.200"><path d="M7 1V12L1 6.500z" /></svg>
          <svg class="arr2" width="8" height="13" viewBox="0 0 8 13" fill="none" stroke="#bdbdbd" stroke-width="1.200"><path d="M1 1V12L7 6.500z" /></svg>
          <div v-for="pg in pages" :key="pg.n" class="ptab" :class="{ active: pg.active }" :style="{ width: pg.w + 'px' }"><span v-fit="pg.tw">{{ pg.n }}</span></div>
          <div class="add"><svg width="16" height="16" viewBox="0 0 16 16" stroke="#141414" stroke-width="3"><path d="M8 0V16M0 8H16" /></svg></div>
        </footer>
      </section>

      <section class="viz">
        <div class="phead"><h2 v-fit="149">Visualizations</h2><svg width="12" height="12" viewBox="0 0 12 12" fill="none" stroke="#fff" stroke-width="1.900"><path d="M1 .500L5.500 6 1 11.500M6 .500L10.500 6 6 11.500" /></svg></div>
        <div class="build"><span v-fit="92">Build visual</span></div>
        <div class="modes">
          <div class="mode on"><svg width="36" height="38" viewBox="0 0 36 38" fill="none"><path d="M0 1.500H29" stroke="#c8c8c8" stroke-width="1.600" /><rect x="1" y="8" width="34" height="11" fill="#2bab94" stroke="#d8d8d8" stroke-width="1.600" stroke-dasharray="2.500 1.500" /><rect x="1" y="25" width="34" height="11" fill="#2bab94" stroke="#d8d8d8" stroke-width="1.600" stroke-dasharray="2.500 1.500" /></svg></div>
          <div class="mode m2"><svg width="34" height="37" viewBox="0 0 34 37" fill="none" stroke="#a8a8a8" stroke-width="1.600"><path d="M1 29V14H10V26M10 24V1H20V21M20 9H29" /><path d="M32.500 12L17 27c-4-1-6 2-6 4s-2 3-5 3c6 3 13 1 14-4C26 25 31 19 32.500 12z" /></svg></div>
          <div class="mode m3"><svg width="37" height="38" viewBox="0 0 37 38" fill="none" stroke="#a8a8a8" stroke-width="1.600"><circle cx="15.500" cy="16" r="14.500" /><path d="M2 17L8 14 13 18 28 8M9 21V29M14 23V30M19 19V30M24 17V26" /><path d="M26 26L35 36" stroke-width="4.500" /></svg></div>
        </div>
        <svg class="notch" width="270" height="12" viewBox="0 0 270 12" fill="none" stroke="#6a6a6a" stroke-width="1.200"><path d="M0 11.400H24.500L36 .800 47.500 11.400H270" /></svg>
        <div class="gallery">
          <div v-for="(g, i) in gallery" :key="i" class="cell" :class="{ sel: i === 7 }"><svg width="28" height="28" viewBox="0 0 28 28" v-html="g"></svg></div>
        </div>
        <div class="more"><i></i><i></i><i></i></div>
        <div class="wells">
          <div v-for="w in wells" :key="w.n" class="well">
            <div class="wname"><span v-fit="w.nw">{{ w.n }}</span></div>
            <div class="drop" :class="{ tall: w.tall }">
              <div class="field">
                <span v-fit="w.fw">{{ w.f }}</span>
                <svg class="fc" width="13" height="8" viewBox="0 0 13 8" fill="none" stroke="#e0e0e0" stroke-width="1.700"><path d="M1 1L6.500 6.500 12 1" /></svg>
                <svg width="10" height="10" viewBox="0 0 10 10" fill="none" stroke="#e0e0e0" stroke-width="1.400"><path d="M.7.700L9.300 9.300M9.300.700L.7 9.300" /></svg>
              </div>
            </div>
          </div>
          <div class="thumb"></div>
        </div>
      </section>

      <section class="data">
        <div class="phead"><h2 v-fit="51">Data</h2><svg width="12" height="12" viewBox="0 0 12 12" fill="none" stroke="#fff" stroke-width="1.900"><path d="M1 .500L5.500 6 1 11.500M6 .500L10.500 6 6 11.500" /></svg></div>
        <div class="search"><svg width="22" height="22" viewBox="0 0 22 22" fill="none" stroke="#b0b0b0" stroke-width="1.500"><circle cx="9" cy="9" r="8" /><path d="M15 15L21 21" /></svg><span v-fit="62">Search</span></div>
        <ul class="tables">
          <li v-for="tb in tables" :key="tb.n">
            <svg width="8" height="13" viewBox="0 0 8 13" fill="none" stroke="#f0f0f0" stroke-width="1.600"><path d="M1 1L6.500 6.500 1 12" /></svg>
            <div class="ticon">
              <svg width="18" height="18" viewBox="0 0 18 18" fill="none" stroke="#f0f0f0" stroke-width="1.500"><rect x="1" y="1" width="16" height="16" rx="3" /><path d="M1 6H17M1 12H17M6 1V17M12 1V17" /></svg>
              <svg v-if="tb.used" class="badge" width="18" height="18" viewBox="0 0 18 18"><circle cx="9" cy="9" r="9" fill="#0f6f60" /><path d="M5.500 9L8 11.500 12.500 6.500" fill="none" stroke="#fff" stroke-width="1.900" /></svg>
            </div>
            <span v-fit="tb.w">{{ tb.n }}</span>
          </li>
        </ul>
      </section>
    </main>
    <div class="status"></div>
  </div>
</template>

<style>
html, body { background: #141414; overflow: hidden; }
</style>

<style scoped>
* { box-sizing: border-box; }
.app { width: 1901px; height: 927px; display: flex; flex-direction: column; background: #141414; color: #f0f0f0; font-family: "Open Sans", "Noto Sans", sans-serif; overflow: hidden; white-space: nowrap; }
.app span, h1, h2 { display: inline-block; }
svg { flex: none; display: block; overflow: visible; }
ul { list-style: none; margin: 0; padding: 0; }
h1, h2 { margin: 0; }

.menu { height: 57px; display: flex; justify-content: space-between; flex: none; }
.tabs { display: flex; }
.tab { font-size: 19.500px; line-height: 55px; height: 48px; color: #d6d6d6; }
.tab.active { color: #fff; font-weight: 700; border-bottom: 3px solid #2bab94; height: 48px; border-radius: 1px; }
.tab.green { color: #2bab94; font-weight: 600; }
.share { margin: 9px 1px 0 0; width: 125px; height: 36px; border: 0; border-radius: 5px; background: #0c695a; display: flex; align-items: center; padding: 0 0 0 10px; color: #c9d6d2; font: 17.500px/36px "Open Sans", sans-serif; }
.share span { margin: 0 7px 0 12px; }

.ribbon { height: 150px; margin: 0 4px 0 1px; background: #292929; border-radius: 12px; display: flex; flex: none; position: relative; z-index: 3; box-shadow: 0 1px 8px rgba(0, 0, 0, .35); }
.group { position: relative; display: flex; flex-direction: column; flex: none; }
.group::after { content: ""; position: absolute; right: 0; top: 6px; height: 138px; width: 1px; background: #424242; }
.clipboard { width: 240px; }
.gbody { display: flex; height: 121px; padding-top: 13px; }
.rbtn { width: 48px; flex: none; display: flex; flex-direction: column; align-items: center; }
.rbtn.off { color: #565656; }
.ricon { margin-bottom: 3px; }
.rl { font-size: 17px; line-height: 24px; height: 24px; display: flex; align-items: center; gap: 4px; }
.menu2 { margin-right: 5px; }
.rl svg { margin-top: 4px; }
.gname { height: 20px; font-size: 14px; line-height: 20px; text-align: center; }
.clip-body { height: 121px; display: flex; padding: 5px 0 0 21px; }
.paste { width: 42px; display: flex; flex-direction: column; align-items: center; padding-top: 10px; color: #565656; font-size: 17px; line-height: 24px; }
.paste svg { margin: 0 0 2px 8px; }
.clip-list { margin-left: 15px; }
.clip-list li { height: 39px; display: flex; align-items: center; gap: 5px; font-size: 17px; line-height: 39px; }
.collapse { margin: 126px 0 0 136px; }

.work { flex: 1; display: flex; min-height: 0; }
.rail { width: 50px; flex: none; border-right: 1px solid #333; display: flex; flex-direction: column; padding: 19px 0 0 5px; }
.rail svg:nth-child(1) { margin-left: 4px; }
.rail svg:nth-child(2) { margin: 36px 0 0 3px; }
.rail svg:nth-child(3) { margin: 34px 0 0 1px; }
.rail svg:nth-child(4) { margin: 34px 0 0 0; }
.center { width: 1317px; flex: none; display: flex; flex-direction: column; }
.stage { flex: 1; background: #fff; display: flex; min-height: 0; }
.frame { margin-left: 51px; width: 1166px; height: 655px; padding: 0 3px 3px; background:
  repeating-linear-gradient(#fff 0 3px, #5f5f5f 3px 6px) 0 0 / 3px 100% no-repeat,
  repeating-linear-gradient(#fff 0 3px, #5f5f5f 3px 6px) 100% 0 / 3px 100% no-repeat,
  repeating-linear-gradient(90deg, #5f5f5f 0 3px, #fff 3px 6px) 0 100% / 100% 3px no-repeat; }
.page { position: relative; height: 652px; width: 1160px; background: #c7e5ff; }
.banner { height: 71px; background: #bba3cf; border-bottom: 1px solid #b595cb; }
.banner h1 { margin-left: 228px; font-size: 29px; line-height: 50px; font-weight: 700; color: #12187f; }
.visual { position: absolute; overflow: hidden; }
.din { font-family: Roboto, sans-serif; }
.ui { font-family: "Open Sans", sans-serif; }
.mute { font-size: 11.500px; fill: #605e5c; }
.bold { font-weight: 700; }
.inside { fill: #fff; }
.chev { fill: none; stroke: #6b6878; stroke-width: 1; }
.heavy { font: italic 700 19px "Liberation Sans", sans-serif; fill: #000; stroke: #000; stroke-width: .5; }
.vtools { position: absolute; left: 831px; top: 349px; display: flex; gap: 5px; }
.vtools span { width: 36px; height: 35px; background: #fff; display: flex; align-items: center; justify-content: center; padding-top: 3px; }
.filters { margin-left: 51px; flex: 1; border-left: 1px solid #b5b5b5; display: flex; flex-direction: column; align-items: center; padding-top: 23px; color: #252423; }
.fi { margin: 29px 0 0 6px; }
.ft { margin: 14px 0 0 0; writing-mode: vertical-rl; font-size: 19px; font-weight: 600; line-height: 24px; height: 66px; }

.pages { height: 53px; background: #292929; display: flex; flex: none; }
.device { height: 47px; }
.device.on { margin-left: 15px; width: 36px; padding: 10px 0 0 6px; border-bottom: 5px solid #2bab94; border-radius: 2px; }
.phone { margin-left: 40px; width: 16px; padding-top: 8px; }
.arr1 { margin: 20px 0 0 33px; }
.arr2 { margin: 20px 11px 0 24px; }
.ptab { border-left: 1px solid #484848; text-align: center; font-size: 17px; line-height: 57px; height: 53px; }
.ptab.active { font-weight: 700; color: #fff; border-bottom: 6px solid #2bab94; }
.add { width: 58px; background: #2bab94; display: flex; align-items: center; justify-content: center; padding-bottom: 2px; }

.viz { width: 272px; flex: none; border-left: 1px solid #6a6a6a; border-right: 1px solid #6a6a6a; display: flex; flex-direction: column; }
.phead { display: flex; justify-content: space-between; align-items: center; height: 32px; margin: 13px 15px 0 12px; color: #fff; flex: none; }
.phead h2 { font-size: 22px; line-height: 32px; font-weight: 600; }
.build { margin: 12px 0 0 12px; font-size: 16.500px; font-weight: 600; line-height: 24px; height: 29px; color: #fff; flex: none; }
.modes { display: flex; height: 49px; margin: 0 0 0 12px; flex: none; }
.mode.on { width: 48px; height: 48px; background: #292929; border-radius: 3px; padding: 6px; }
.m2 { margin: 7px 0 0 60px; }
.m3 { margin: 6px 0 0 62px; }
.notch { margin-top: 6px; }
.gallery { margin: 10px 0 0 9px; display: grid; grid-template-columns: repeat(6, 42px); grid-auto-rows: 42px; flex: none; }
.cell { display: flex; align-items: center; justify-content: center; }
.cell.sel { border: 1px solid #fff; margin: 3px; }
.more { display: flex; gap: 3px; height: 48px; padding: 17px 0 0 21px; flex: none; }
.more i { width: 4px; height: 4px; background: #fff; border-radius: 50%; }
.wells { flex: 1; border-top: 1px solid #e0e0e0; position: relative; padding: 13px 8px 0 6px; }
.well { margin-bottom: 15px; }
.wname { padding-left: 12px; font-size: 17px; line-height: 24px; height: 32px; }
.drop { border: 1px dashed #6d6d6d; border-radius: 3px; padding: 3px; height: 42px; width: 256px; }
.drop.tall { height: 53px; }
.field { height: 34px; width: 248px; background: #202020; border: 1px solid #6d6d6d; border-radius: 3px; display: flex; align-items: center; padding: 0 8px 0 6px; font-size: 17px; line-height: 32px; }
.fc { margin: 0 12px 0 auto; }
.thumb { position: absolute; right: 0; top: 3px; width: 9px; height: 52px; border-radius: 5px; background: #adadad; }

.data { flex: 1; min-width: 0; overflow: hidden; display: flex; flex-direction: column; }
.data .phead { margin: 13px 7px 0 12px; }
.search { margin: 23px -5px 0 6px; height: 36px; border: 1px solid #777; border-radius: 5px; background: #262626; display: flex; align-items: center; padding-left: 18px; gap: 9px; color: #9a9a9a; font-size: 19px; line-height: 34px; flex: none; }
.tables { padding: 14px 0 0 26px; }
.tables li { display: flex; align-items: center; height: 36px; font-size: 17.500px; line-height: 34px; }
.tables li > span { margin-top: 2px; }
.ticon { position: relative; margin: 0 8px 0 10px; }
.badge { position: absolute; left: 9px; top: 9px; }
.status { height: 3px; background: #141414; border-top: 1px solid #6a6a6a; flex: none; }
</style>
